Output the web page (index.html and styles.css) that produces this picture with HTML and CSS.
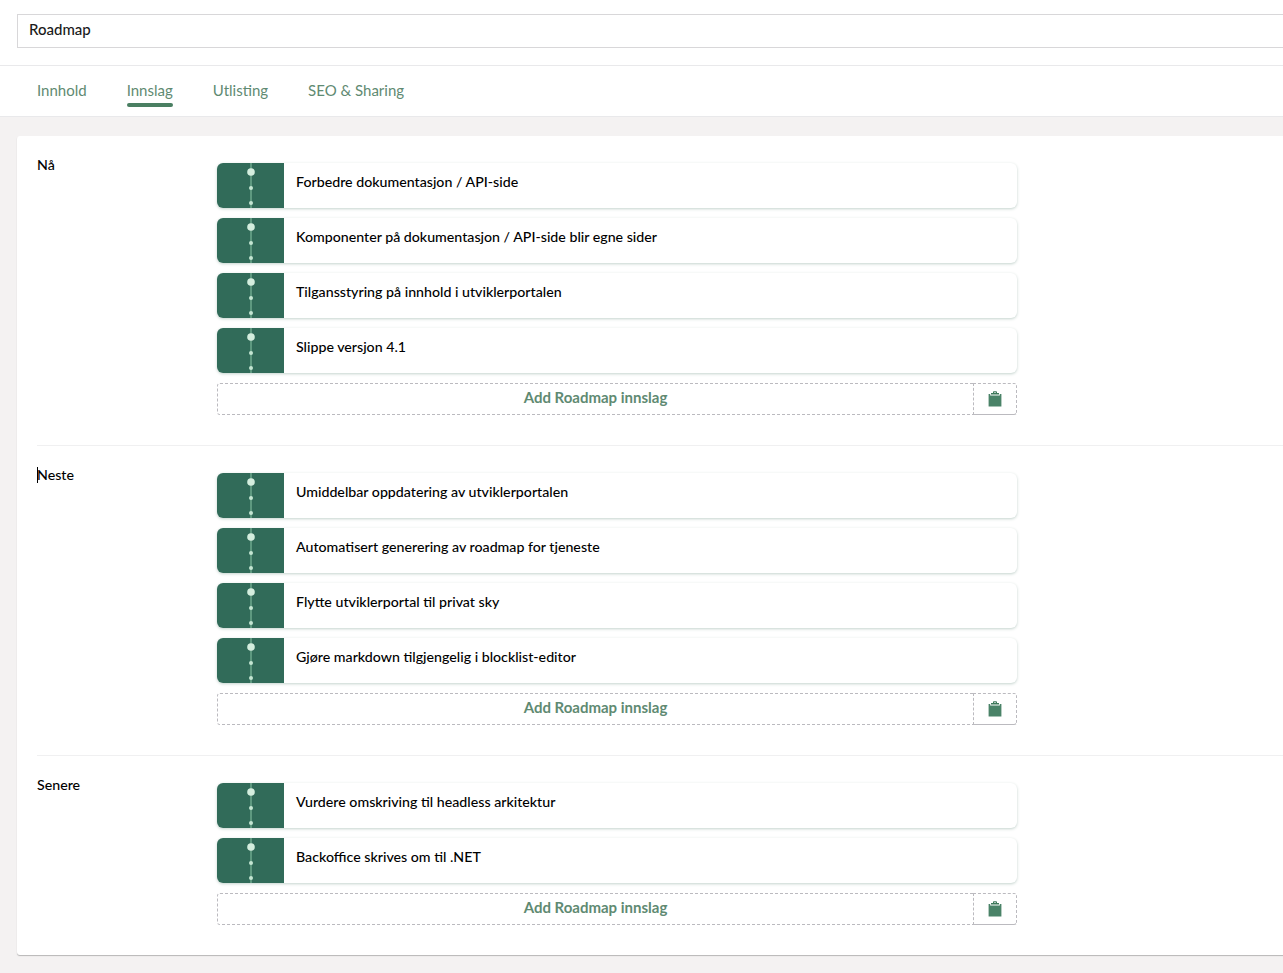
FILE: index.html
```html
<!DOCTYPE html>
<html lang="en">
<head>
    <meta charset="UTF-8">
    <title>Roadmap</title>
    <link rel="stylesheet" href="styles.css">
</head>
<body>
    <svg class="sprite" width="0" height="0">
        <symbol id="thumb" viewBox="0 0 67 45">
            <rect x="33.5" width="1" height="45" fill="#8cc7a8"/>
            <circle cx="34" cy="9" r="3.8" fill="#d4eede"/>
            <circle cx="34" cy="25" r="2" fill="#c4e6d2"/>
            <circle cx="34" cy="40" r="2" fill="#c4e6d2"/>
        </symbol>
        <symbol id="clipboard" viewBox="0 0 14 16">
            <path d="M5 2V1.2C5 .6 5.5 .2 6 .2h2c.5 0 1 .4 1 1V2h2v1.6H3V2zM6.2 1.2v.8h1.6v-.8z" fill="#3f7a5c" fill-rule="evenodd"/>
            <path d="M.6 3h1.6v1.6h9.6V3h1.6v12.6H.6z" fill="#4a8368"/>
        </symbol>
    </svg>

    <header class="top">
        <div class="name-row">
            <div class="name-input">Roadmap</div>
        </div>
        <nav class="tabs">
            <a class="tab">Innhold</a>
            <a class="tab active">Innslag</a>
            <a class="tab">Utlisting</a>
            <a class="tab">SEO &amp; Sharing</a>
        </nav>
    </header>

    <main class="content">
        <section class="card">
            <div class="property">
                <div class="prop-label">Nå</div>
                <div class="blocks">
                    <div class="block"><svg class="thumb"><use href="#thumb"/></svg><span class="block-title">Forbedre dokumentasjon / API-side</span></div>
                    <div class="block"><svg class="thumb"><use href="#thumb"/></svg><span class="block-title">Komponenter på dokumentasjon / API-side blir egne sider</span></div>
                    <div class="block"><svg class="thumb"><use href="#thumb"/></svg><span class="block-title">Tilgansstyring på innhold i utviklerportalen</span></div>
                    <div class="block"><svg class="thumb"><use href="#thumb"/></svg><span class="block-title">Slippe versjon 4.1</span></div>
                    <div class="add-row">
                        <button class="add-btn">Add Roadmap innslag</button>
                        <button class="paste-btn"><svg class="clip"><use href="#clipboard"/></svg></button>
                    </div>
                </div>
            </div>
            <div class="property">
                <div class="prop-label caret">Neste</div>
                <div class="blocks">
                    <div class="block"><svg class="thumb"><use href="#thumb"/></svg><span class="block-title">Umiddelbar oppdatering av utviklerportalen</span></div>
                    <div class="block"><svg class="thumb"><use href="#thumb"/></svg><span class="block-title">Automatisert generering av roadmap for tjeneste</span></div>
                    <div class="block"><svg class="thumb"><use href="#thumb"/></svg><span class="block-title">Flytte utviklerportal til privat sky</span></div>
                    <div class="block"><svg class="thumb"><use href="#thumb"/></svg><span class="block-title">Gjøre markdown tilgjengelig i blocklist-editor</span></div>
                    <div class="add-row">
                        <button class="add-btn">Add Roadmap innslag</button>
                        <button class="paste-btn"><svg class="clip"><use href="#clipboard"/></svg></button>
                    </div>
                </div>
            </div>
            <div class="property">
                <div class="prop-label">Senere</div>
                <div class="blocks">
                    <div class="block"><svg class="thumb"><use href="#thumb"/></svg><span class="block-title">Vurdere omskriving til headless arkitektur</span></div>
                    <div class="block"><svg class="thumb"><use href="#thumb"/></svg><span class="block-title">Backoffice skrives om til .NET</span></div>
                    <div class="add-row">
                        <button class="add-btn">Add Roadmap innslag</button>
                        <button class="paste-btn"><svg class="clip"><use href="#clipboard"/></svg></button>
                    </div>
                </div>
            </div>
        </section>
    </main>
</body>
</html>
```
FILE: styles.css
```css
html, body {
    margin: 0;
    height: 973px;
    overflow: hidden;
}
body {
    font-family: Lato, "Open Sans", sans-serif;
    font-size: 15px;
    color: #000;
    background: #f4f2f2;
}
.sprite {
    position: absolute;
}
.top {
    height: 116px;
    background: #fff;
    border-bottom: 1px solid #e9e9eb;
}
.name-row {
    height: 66px;
    padding: 14px 0 0 17px;
    box-sizing: border-box;
    border-bottom: 1px solid #e9e9eb;
}
.name-input {
    width: 1300px;
    height: 34px;
    box-sizing: border-box;
    border: 1px solid #d8d7d9;
    padding: 0 11px;
    line-height: 29px;
    font-weight: 500;
    color: #1a1a1a;
}
.tabs {
    display: flex;
    gap: 40px;
    padding-left: 37px;
}
.tab {
    height: 50px;
    line-height: 48px;
    color: #5f8a72;
    position: relative;
}
.tab.active::after {
    content: "";
    position: absolute;
    left: 0;
    right: 0;
    bottom: 9px;
    height: 4px;
    border-radius: 2px;
    background: #4a7f62;
}
.content {
    padding: 19px 0 0 17px;
}
.card {
    width: 1300px;
    height: 819px;
    box-sizing: border-box;
    padding: 0 20px;
    background: #fff;
    border-radius: 3px;
    box-shadow: 0 1px 1px rgba(0,0,0,0.25);
}
.property {
    display: flex;
    height: 310px;
    padding-top: 27px;
    box-sizing: border-box;
    border-bottom: 1px solid #f0f0f1;
}
.property:last-child {
    height: auto;
    border-bottom: none;
}
.prop-label {
    width: 180px;
    flex-shrink: 0;
    margin-top: -7px;
    line-height: 18px;
    font-size: 14.2px;
    font-weight: 500;
}
.caret {
    position: relative;
}
.caret::before {
    content: "";
    position: absolute;
    left: 0;
    top: 1px;
    width: 1px;
    height: 16px;
    background: #000;
}
.blocks {
    width: 800px;
    display: flex;
    flex-direction: column;
    gap: 10px;
}
.block {
    height: 45px;
    display: flex;
    align-items: center;
    background: #fff;
    border-radius: 6px;
    overflow: hidden;
    box-shadow: 0 1px 3px rgba(60,110,90,0.3);
}
.thumb {
    width: 67px;
    height: 45px;
    flex-shrink: 0;
    background: #316b59;
}
.block-title {
    padding: 0 0 9px 12px;
    font-size: 14.2px;
    font-weight: 500;
    color: #000;
}
.add-row {
    display: flex;
    height: 32px;
}
.add-btn, .paste-btn {
    font: inherit;
    background: #fff;
    border: 1px dashed #bbbabf;
    padding: 0;
}
.add-btn {
    flex: 1;
    font-weight: 700;
    color: #5f8a72;
    border-radius: 3px 0 0 3px;
    padding-bottom: 5px;
}
.paste-btn {
    width: 44px;
    margin-left: -1px;
    border-bottom-style: solid;
    border-radius: 0 3px 3px 0;
    display: flex;
    align-items: center;
    justify-content: center;
}
.clip {
    width: 14px;
    height: 16px;
}
```
